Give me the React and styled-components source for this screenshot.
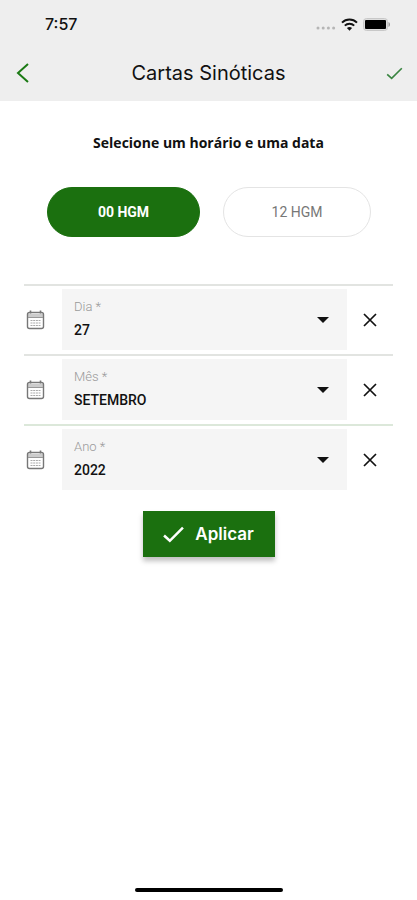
import { useState } from "react";
import styled, { createGlobalStyle } from "styled-components";

const GlobalStyle = createGlobalStyle`
  *,
  *::before,
  *::after {
    box-sizing: border-box;
  }

  body {
    margin: 0;
    background-color: #fff;
    color: #111;
    font-family: Roboto, "Liberation Sans", sans-serif;
  }

  button,
  select {
    font-family: inherit;
    cursor: pointer;
  }
`;

const StyledScreen = styled.div`
  display: flex;
  flex-direction: column;
  min-height: 100vh;
`;

const StyledHeader = styled.header`
  padding-bottom: 3px;
  background-color: #eee;
`;

const StyledStatusBar = styled.div`
  display: flex;
  justify-content: space-between;
  align-items: center;
  height: 48px;
  padding: 0 26px 0 45px;
`;

const StyledTime = styled.span`
  font-family: Inter, sans-serif;
  font-size: 16px;
  font-weight: 500;
`;

const StyledStatusIcons = styled.div`
  display: flex;
  align-items: center;
  gap: 5px;
`;

const StyledToolbar = styled.div`
  display: grid;
  grid-template-columns: 46px 1fr 46px;
  align-items: center;
  height: 50px;
`;

const StyledTitle = styled.h1`
  margin: 0;
  font-family: Inter, sans-serif;
  font-size: 20px;
  font-weight: 400;
  line-height: 24px;
  text-align: center;
`;

const StyledIconButton = styled.button`
  display: flex;
  justify-content: center;
  align-items: center;
  height: 48px;
  padding: 0;
  border: none;
  background: none;
  color: ${({ $color }) => $color || "#111"};
`;

const StyledMain = styled.main`
  flex: 1;
  padding: 31px 24px;
`;

const StyledSubtitle = styled.h2`
  margin: 0;
  font-family: "Open Sans", sans-serif;
  font-size: 14px;
  font-weight: 700;
  line-height: 22px;
  text-align: center;
`;

const StyledHours = styled.div`
  display: grid;
  grid-template-columns: 153fr 148fr;
  gap: 23px;
  padding: 33px 22px 47px 23px;
`;

const StyledHourButton = styled.button`
  height: 50px;
  border: 1px solid ${({ $active }) => ($active ? "#1b700f" : "#e4e4e4")};
  border-radius: 25px;
  background-color: ${({ $active }) => ($active ? "#1b700f" : "#fff")};
  color: ${({ $active }) => ($active ? "#fff" : "#777")};
  font-size: 14px;
  font-weight: ${({ $active }) => ($active ? 700 : 400)};
`;

const StyledRow = styled.div`
  display: grid;
  grid-template-columns: 38px 1fr 46px;
  align-items: center;
  padding: 3px 0 4px;
  border-top: 2px solid ${({ $highlight }) => ($highlight ? "#dce8da" : "#e2e4e1")};
`;

const StyledField = styled.div`
  display: grid;
  align-items: center;
  height: 61px;
  background-color: #f5f5f5;

  > * {
    grid-area: 1 / 1;
  }
`;

const StyledLabel = styled.label`
  align-self: start;
  padding: 9px 12px 0;
  color: #999;
  font-size: 13px;
  font-weight: 300;
  line-height: 18px;
  pointer-events: none;
`;

const StyledSelect = styled.select`
  width: 100%;
  height: 61px;
  padding: 20px 40px 0 12px;
  border: none;
  background: none;
  color: #111;
  font-size: 14px;
  font-weight: 500;
  appearance: none;
`;

const StyledCaret = styled.span`
  justify-self: end;
  margin-right: 18px;
  border: 6px solid transparent;
  border-top-color: #111;
  border-bottom: none;
  pointer-events: none;
`;

const StyledApplyButton = styled.button`
  display: flex;
  justify-content: center;
  align-items: center;
  gap: 11px;
  width: 132px;
  height: 46px;
  margin: 17px auto 0;
  padding: 0;
  border: none;
  background-color: #1b700f;
  box-shadow: 0 4px 5px rgba(0, 0, 0, 0.25);
  color: #fff;
  font-family: Inter, sans-serif;
  font-size: 17px;
  font-weight: 600;
`;

const StyledFooter = styled.footer`
  display: flex;
  justify-content: center;
  padding-bottom: 8px;
`;

const StyledHomeIndicator = styled.div`
  width: 148px;
  height: 4px;
  border-radius: 2px;
  background-color: #000;
`;

function CheckIcon({ width, height, strokeWidth }) {
  return (
    <svg width={width} height={height} viewBox="0 0 20 16" fill="none" stroke="currentColor" strokeWidth={strokeWidth} aria-hidden="true">
      <path d="M1 9l5.5 5L19 1.5" />
    </svg>
  );
}

function CalendarIcon() {
  return (
    <svg width="23" height="20" viewBox="0 0 23 20" fill="none" stroke="#777" aria-hidden="true">
      <path d="M4 4h15v3H4z" fill="#ccc" stroke="none" />
      <rect x="3.5" y="2.5" width="16" height="16" rx="2" strokeWidth="1.4" />
      <path d="M4 7.5h15" stroke="#999" />
      <path d="M6.5 0.5v3M16.5 0.5v3" strokeWidth="1.6" />
      <path d="M6.5 10.5h10M6.5 13h10M6.5 15.5h10" strokeDasharray="2 0.7" stroke="#aaa" />
    </svg>
  );
}

function CloseIcon() {
  return (
    <svg width="14" height="14" viewBox="0 0 14 14" fill="none" stroke="currentColor" strokeWidth="1.7" aria-hidden="true">
      <path d="M1 1l12 12M13 1L1 13" />
    </svg>
  );
}

const fields = [
  {
    id: "day",
    label: "Dia",
    initial: "27",
    options: Array.from({ length: 31 }, (_, index) => String(index + 1)),
  },
  {
    id: "month",
    label: "Mês",
    initial: "SETEMBRO",
    options: [
      "JANEIRO",
      "FEVEREIRO",
      "MARÇO",
      "ABRIL",
      "MAIO",
      "JUNHO",
      "JULHO",
      "AGOSTO",
      "SETEMBRO",
      "OUTUBRO",
      "NOVEMBRO",
      "DEZEMBRO",
    ],
  },
  {
    id: "year",
    label: "Ano",
    initial: "2022",
    options: ["2020", "2021", "2022"],
    highlight: true,
  },
];

function DateField({ id, label, initial, options, highlight }) {
  const [value, setValue] = useState(initial);

  return (
    <StyledRow $highlight={highlight}>
      <CalendarIcon />
      <StyledField>
        <StyledLabel htmlFor={id}>{label} *</StyledLabel>
        <StyledSelect id={id} value={value} onChange={(event) => setValue(event.target.value)}>
          <option value="" />
          {options.map((option) => (
            <option key={option} value={option}>
              {option}
            </option>
          ))}
        </StyledSelect>
        <StyledCaret />
      </StyledField>
      <StyledIconButton type="button" aria-label={`Limpar ${label}`} onClick={() => setValue("")}>
        <CloseIcon />
      </StyledIconButton>
    </StyledRow>
  );
}

export default function App() {
  const [hour, setHour] = useState("00");

  return (
    <StyledScreen>
      <GlobalStyle />
      <StyledHeader>
        <StyledStatusBar>
          <StyledTime>7:57</StyledTime>
          <StyledStatusIcons>
            <svg width="20" height="14" viewBox="0 0 20 14" fill="#b5b5b5" aria-hidden="true">
              <circle cx="2" cy="11" r="1.5" />
              <circle cx="7.2" cy="11" r="1.5" />
              <circle cx="12.4" cy="11" r="1.5" />
              <circle cx="17.6" cy="11" r="1.5" />
            </svg>
            <svg width="17" height="13" viewBox="0 0 17 13" fill="none" stroke="#111" strokeWidth="2" aria-hidden="true">
              <path d="M1 4.6a10.6 10.6 0 0 1 15 0" />
              <path d="M3.8 7.6a6.7 6.7 0 0 1 9.4 0" />
              <path d="M5.9 10a4 4 0 0 1 5.2 0L8.5 12.8z" fill="#111" stroke="none" />
            </svg>
            <svg width="28" height="13" viewBox="0 0 28 13" aria-hidden="true">
              <rect x="0.5" y="0.5" width="24" height="12" rx="3" fill="#ddd" stroke="#c8c8c8" />
              <rect x="2" y="2" width="21" height="9" rx="1" fill="#000" />
              <path d="M25.5 4c2 0.8 2 4.2 0 5z" fill="#999" />
            </svg>
          </StyledStatusIcons>
        </StyledStatusBar>
        <StyledToolbar>
          <StyledIconButton type="button" aria-label="Voltar" $color="#1b7a14">
            <svg width="14" height="20" viewBox="0 0 14 20" fill="none" stroke="currentColor" strokeWidth="2" aria-hidden="true">
              <path d="M12 1L2 10l10 9" />
            </svg>
          </StyledIconButton>
          <StyledTitle>Cartas Sinóticas</StyledTitle>
          <StyledIconButton type="button" aria-label="Confirmar" $color="#398440">
            <CheckIcon width={17} height={13} strokeWidth={2} />
          </StyledIconButton>
        </StyledToolbar>
      </StyledHeader>

      <StyledMain>
        <StyledSubtitle>Selecione um horário e uma data</StyledSubtitle>
        <StyledHours>
          {["00", "12"].map((option) => (
            <StyledHourButton
              key={option}
              type="button"
              $active={hour === option}
              aria-pressed={hour === option}
              onClick={() => setHour(option)}
            >
              {option} HGM
            </StyledHourButton>
          ))}
        </StyledHours>
        {fields.map((field) => (
          <DateField key={field.id} {...field} />
        ))}
        <StyledApplyButton type="button">
          <CheckIcon width={21} height={17} strokeWidth={2.4} />
          Aplicar
        </StyledApplyButton>
      </StyledMain>

      <StyledFooter>
        <StyledHomeIndicator />
      </StyledFooter>
    </StyledScreen>
  );
}
